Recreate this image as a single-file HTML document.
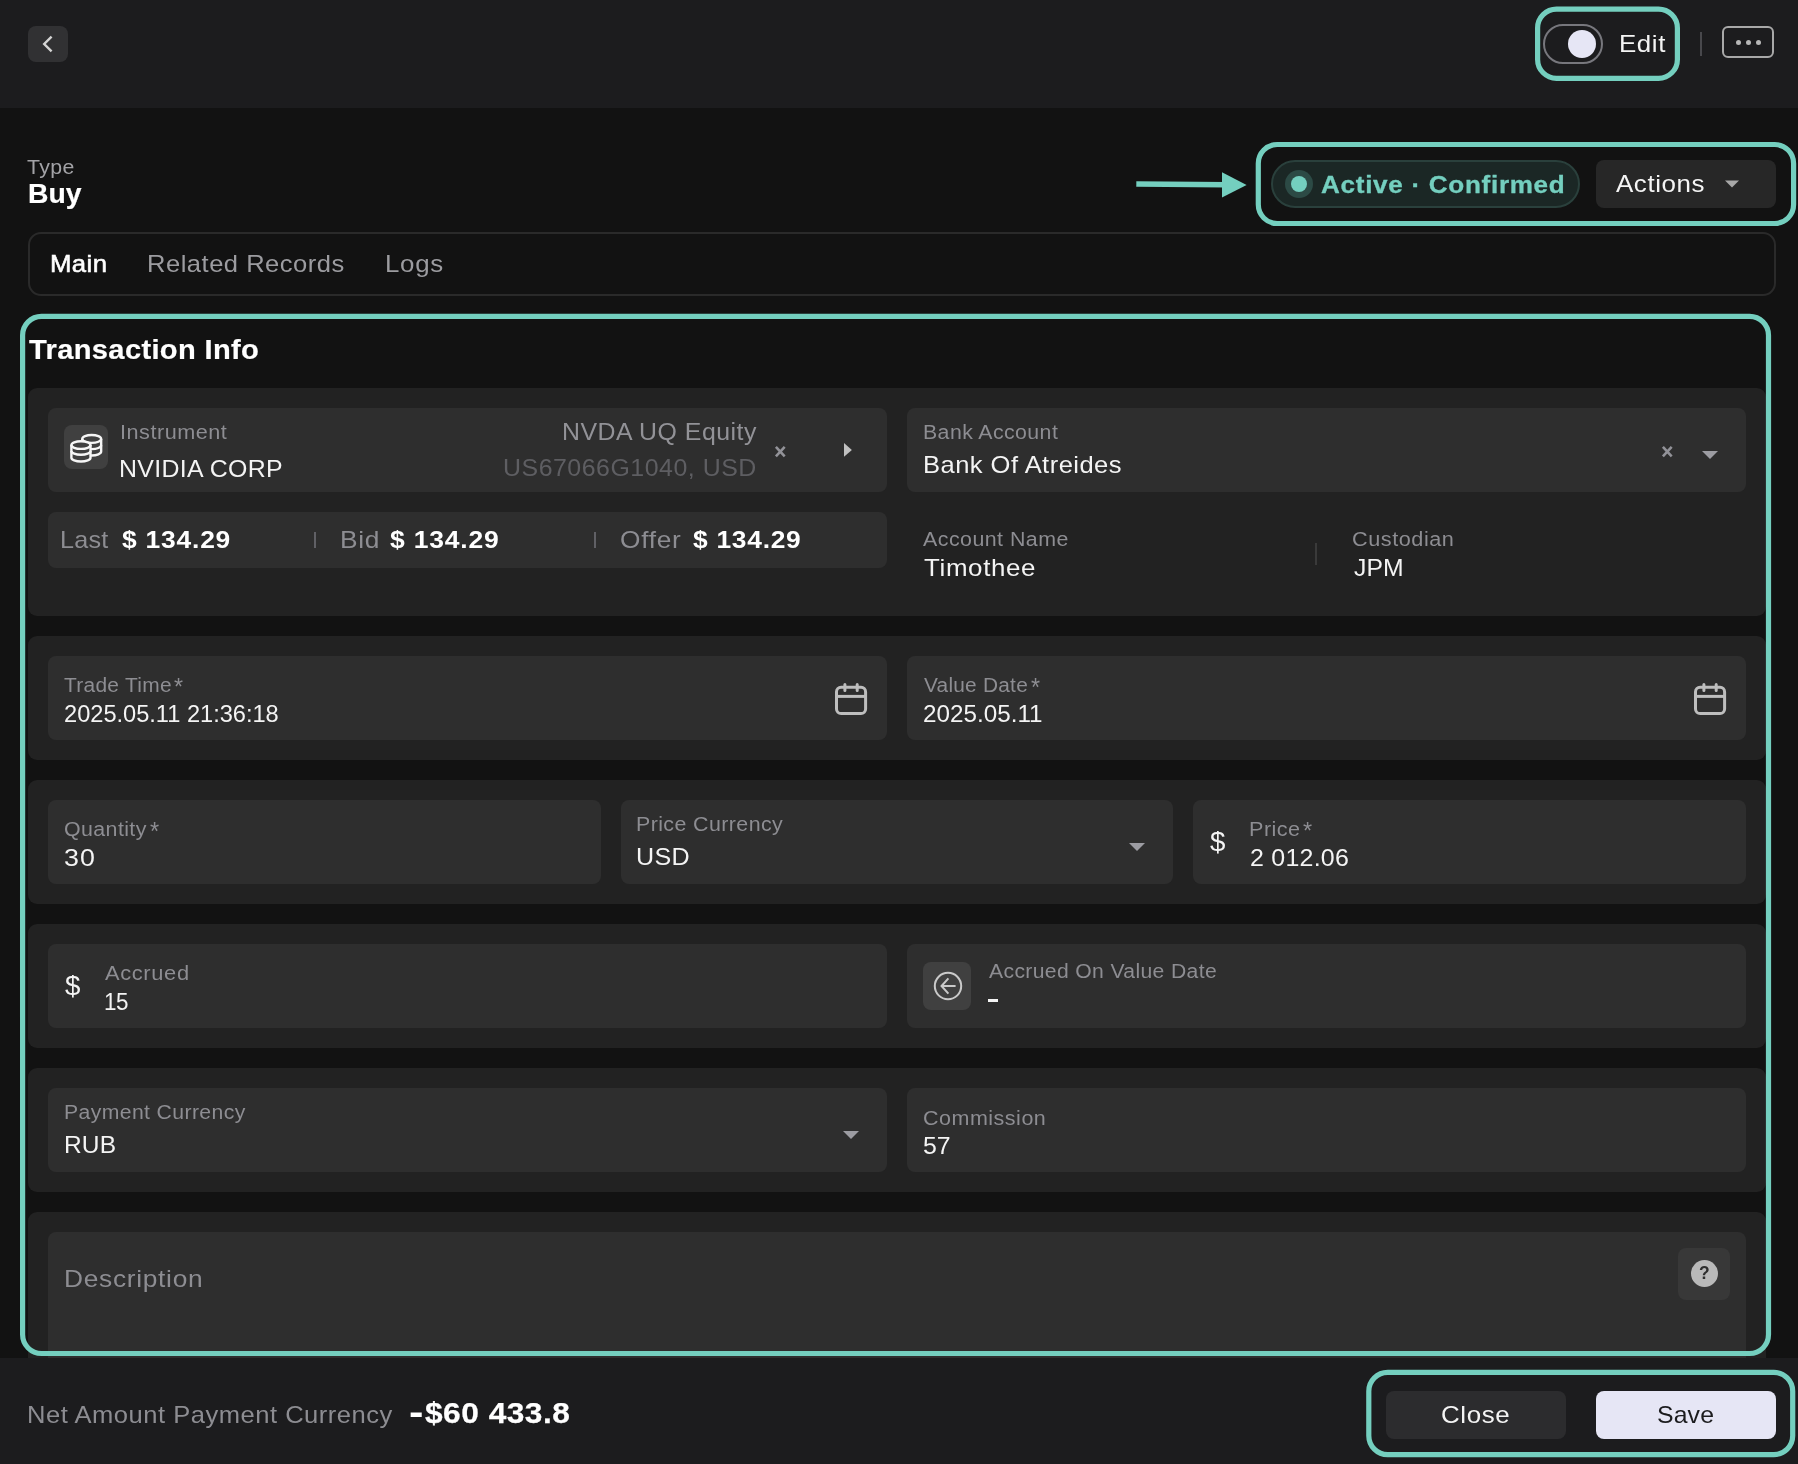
<!DOCTYPE html>
<html><head><meta charset="utf-8">
<style>
*{box-sizing:border-box;margin:0;padding:0}
html,body{width:1798px;height:1464px;overflow:hidden;background:#121212;font-family:"Liberation Sans",sans-serif;color:#fff}
.a{position:absolute}
.t{position:absolute;white-space:pre;line-height:1;transform-origin:0 50%}
.sec{position:absolute;left:28px;width:1738px;background:#222222;border-radius:9px}
.fld{position:absolute;background:#2e2e2e;border-radius:8px}
.teal{position:absolute;border:5px solid #74cfbf}
svg{position:absolute;overflow:visible}
</style></head><body>
<!-- header -->
<div class="a" style="left:0;top:0;width:1798px;height:108px;background:#1c1c1e"></div>
<div class="a" style="left:28px;top:26px;width:40px;height:36px;border-radius:8px;background:#313133"></div>
<svg style="left:28px;top:26px" width="40" height="36" viewBox="0 0 40 36"><path d="M23.6 10.6 L16.2 18 L23.6 25.4" fill="none" stroke="#d4d4d4" stroke-width="2.4"/></svg>
<div class="a" style="left:1543px;top:24px;width:60px;height:40px;border-radius:20px;border:2px solid #77777d"></div>
<div class="a" style="left:1568px;top:30px;width:28px;height:28px;border-radius:14px;background:#e6e6f5"></div>
<div class="a" style="left:1700px;top:32px;width:2px;height:24px;background:#48484c"></div>
<div class="a" style="left:1722px;top:26px;width:52px;height:32px;border-radius:6px;border:2px solid #a8a8a8"></div>
<div class="a" style="left:1735.5px;top:40px;width:5px;height:5px;border-radius:3px;background:#b8b8b8"></div>
<div class="a" style="left:1745.5px;top:40px;width:5px;height:5px;border-radius:3px;background:#b8b8b8"></div>
<div class="a" style="left:1755.5px;top:40px;width:5px;height:5px;border-radius:3px;background:#b8b8b8"></div>

<!-- status row -->
<svg style="left:0;top:0" width="1798" height="300" viewBox="0 0 1798 300"><path d="M1136.3 184 L1226 184.8" stroke="#74cfbf" stroke-width="5.4" fill="none"/><path d="M1222 172.3 L1246.6 184.9 L1222 197.4 Z" fill="#74cfbf"/></svg>
<div class="a" style="left:1271px;top:160px;width:309px;height:48px;border-radius:24px;background:#1b2725;border:2px solid #2a403c"></div>
<div class="a" style="left:1284.7px;top:170px;width:28px;height:28px;border-radius:14px;background:#2c4a45"></div>
<div class="a" style="left:1291px;top:176px;width:16px;height:16px;border-radius:8px;background:#74cfbf"></div>
<div class="a" style="left:1596px;top:160px;width:180px;height:48px;border-radius:8px;background:#272727"></div>
<svg style="left:1725px;top:180px" width="14" height="8" viewBox="0 0 14 8"><path d="M0 0.5 H14 L7 7.5 Z" fill="#a8a8a8"/></svg>

<!-- tabs -->
<div class="a" style="left:28px;top:232px;width:1748px;height:64px;border-radius:13px;border:2px solid #2a2a2a"></div>

<!-- sections -->
<div class="sec" style="top:388px;height:228px"></div>
<div class="fld" style="left:48px;top:408px;width:839px;height:84px"></div>
<div class="fld" style="left:907px;top:408px;width:839px;height:84px"></div>
<div class="fld" style="left:48px;top:512px;width:839px;height:56px"></div>
<div class="a" style="left:64px;top:425px;width:44px;height:44px;border-radius:8px;background:#404040"></div>
<svg style="left:64px;top:425px" width="44" height="44" viewBox="64 425 44 44" fill="none" stroke="#f6f6f6" stroke-width="2.4">
 <ellipse cx="91.7" cy="438.95" rx="9.45" ry="3.95"/>
 <path d="M82.25 438.95 V451.5 A9.45 3.95 0 0 0 101.15 451.5 V438.95"/>
 <path d="M82.25 445.2 A9.45 3.95 0 0 0 101.15 445.2"/>
 <path d="M71.4 445.05 V457.65 A9.55 3.85 0 0 0 90.5 457.65 V445.05 A9.55 3.85 0 0 0 71.4 445.05Z" fill="#404040" stroke="none"/>
 <ellipse cx="80.95" cy="445.05" rx="9.55" ry="3.85"/>
 <path d="M71.4 445.05 V457.65 A9.55 3.85 0 0 0 90.5 457.65 V445.05"/>
 <path d="M71.4 450.95 A9.55 3.85 0 0 0 90.5 450.95"/>
</svg>
<svg style="left:774.8px;top:445.8px" width="10.6" height="11.2" viewBox="0 0 10.6 11.2"><path d="M0.9 0.9 L9.7 10.3 M9.7 0.9 L0.9 10.3" stroke="#929298" stroke-width="2.6"/></svg>
<svg style="left:843.9px;top:443.2px" width="8" height="13.8" viewBox="0 0 8 13.8"><path d="M0 0 L7.9 6.9 L0 13.8 Z" fill="#c0c0c0"/></svg>
<svg style="left:1662px;top:445.8px" width="10.6" height="11.2" viewBox="0 0 10.6 11.2"><path d="M0.9 0.9 L9.7 10.3 M9.7 0.9 L0.9 10.3" stroke="#929298" stroke-width="2.6"/></svg>
<svg style="left:1701.5px;top:451px" width="16" height="8" viewBox="0 0 16 8"><path d="M0 0 H16 L8 8 Z" fill="#9c9ca2"/></svg>
<div class="a" style="left:314px;top:532px;width:2px;height:16px;background:#606065"></div>
<div class="a" style="left:593.5px;top:532px;width:2px;height:16px;background:#606065"></div>
<div class="a" style="left:1315px;top:543px;width:2px;height:22px;background:#3a3a3a"></div>

<div class="sec" style="top:636px;height:124px"></div>
<div class="fld" style="left:48px;top:656px;width:839px;height:84px"></div>
<div class="fld" style="left:907px;top:656px;width:839px;height:84px"></div>

<svg style="left:0;top:0" width="1798" height="1464" viewBox="0 0 1798 1464" fill="none" stroke="#bebebe" stroke-width="3" stroke-linecap="round">
<g><rect x="836.5" y="687.3" width="29.1" height="26.3" rx="4.6"/><path d="M836.5 696.4 H865.6" stroke-linecap="butt"/><path d="M844.9 684.6 V690.4 M857.2 684.6 V690.4"/></g>
<g transform="translate(859 0)"><rect x="836.5" y="687.3" width="29.1" height="26.3" rx="4.6"/><path d="M836.5 696.4 H865.6" stroke-linecap="butt"/><path d="M844.9 684.6 V690.4 M857.2 684.6 V690.4"/></g>
</svg>
<div class="sec" style="top:780px;height:124px"></div>
<div class="fld" style="left:48px;top:800px;width:553px;height:84px"></div>
<div class="fld" style="left:621px;top:800px;width:552px;height:84px"></div>
<div class="fld" style="left:1193px;top:800px;width:553px;height:84px"></div>
<svg style="left:1129px;top:843px" width="16" height="8" viewBox="0 0 16 8"><path d="M0 0 H16 L8 8 Z" fill="#9c9ca2"/></svg>

<div class="sec" style="top:924px;height:124px"></div>
<div class="fld" style="left:48px;top:944px;width:839px;height:84px"></div>
<div class="fld" style="left:907px;top:944px;width:839px;height:84px"></div>
<div class="a" style="left:923px;top:962px;width:48px;height:48px;border-radius:8px;background:#404040"></div>
<svg style="left:923px;top:962px" width="48" height="48" viewBox="923 962 48 48" fill="none" stroke="#cacaca" stroke-width="2"><circle cx="948" cy="986.05" r="13.2"/><path d="M955.6 986 H941.8 M948.4 978.4 L941.5 986 L948.4 993.6"/></svg>
<div class="a" style="left:987.8px;top:999.3px;width:10.4px;height:2.5px;background:#f4f4f4"></div>

<div class="sec" style="top:1068px;height:124px"></div>
<div class="fld" style="left:48px;top:1088px;width:839px;height:84px"></div>
<div class="fld" style="left:907px;top:1088px;width:839px;height:84px"></div>
<svg style="left:843px;top:1131px" width="16" height="8" viewBox="0 0 16 8"><path d="M0 0 H16 L8 8 Z" fill="#9c9ca2"/></svg>

<div class="sec" style="top:1212px;height:160px"></div>
<div class="fld" style="left:48px;top:1232px;width:1698px;height:140px"></div>
<div class="a" style="left:1678px;top:1248px;width:52px;height:52px;border-radius:8px;background:#383838"></div>
<div class="a" style="left:1690.5px;top:1260.4px;width:27.1px;height:27.1px;border-radius:14px;background:#b9b9b9"></div>

<!-- footer -->
<div class="a" style="left:0;top:1358px;width:1798px;height:106px;background:#1c1c1e"></div>
<div class="a" style="left:1386px;top:1391px;width:180px;height:48px;border-radius:8px;background:#2c2c2e"></div>
<div class="a" style="left:1596px;top:1391px;width:180px;height:48px;border-radius:8px;background:#e6e6f5"></div>

<svg style="left:0;top:0" width="1798" height="1464" viewBox="0 0 1798 1464" fill="none" stroke="#74cfbf" stroke-width="5.2">
<rect x="1537.60" y="9.10" width="139.80" height="69.20" rx="18.90"/>
<rect x="1258.30" y="144.50" width="535.30" height="79.00" rx="18.90"/>
<rect x="22.60" y="316.40" width="1745.90" height="1037.10" rx="18.90"/>
<rect x="1368.80" y="1372.40" width="423.90" height="82.20" rx="18.90"/>
</svg>
<div class="a" style="left:0;top:0;width:1798px;height:1464px;will-change:transform">
<div class="t" style="left:1618.92px;top:31.7px;font-size:24px;font-weight:400;color:#f4f4f4;letter-spacing:0.530px;transform:scaleX(1.0786);">Edit</div>
<div class="t" style="left:27.48px;top:157.1px;font-size:20px;font-weight:400;color:#a2a2a6;letter-spacing:0.410px;transform:scaleX(1.0643);">Type</div>
<div class="t" style="left:27.55px;top:180.3px;font-size:28px;font-weight:700;color:#ffffff;letter-spacing:-0.056px;transform:scaleX(1.0117);-webkit-text-stroke:0.2px #fff;">Buy</div>
<div class="t" style="left:1321.08px;top:172.7px;font-size:24px;font-weight:700;color:#74cfbf;letter-spacing:0.636px;transform:scaleX(1.0874);-webkit-text-stroke:0.3px #74cfbf;">Active · Confirmed</div>
<div class="t" style="left:1616.16px;top:171.7px;font-size:24px;font-weight:400;color:#f4f4f4;letter-spacing:0.532px;transform:scaleX(1.0797);">Actions</div>
<div class="t" style="left:49.95px;top:251.7px;font-size:24px;font-weight:400;color:#ffffff;letter-spacing:0.389px;transform:scaleX(1.0713);-webkit-text-stroke:0.55px #fff;">Main</div>
<div class="t" style="left:147.18px;top:251.7px;font-size:24px;font-weight:400;color:#9c9ca0;letter-spacing:0.467px;transform:scaleX(1.0648);">Related Records</div>
<div class="t" style="left:384.94px;top:251.7px;font-size:24px;font-weight:400;color:#9c9ca0;letter-spacing:0.656px;transform:scaleX(1.0772);">Logs</div>
<div class="t" style="left:28.64px;top:336.3px;font-size:28px;font-weight:700;color:#ffffff;letter-spacing:0.329px;transform:scaleX(1.0394);-webkit-text-stroke:0.2px #fff;">Transaction Info</div>
<div class="t" style="left:119.52px;top:422.1px;font-size:20px;font-weight:400;color:#8d8d92;letter-spacing:0.469px;transform:scaleX(1.0822);">Instrument</div>
<div class="t" style="left:119.35px;top:456.7px;font-size:24px;font-weight:400;color:#f4f4f4;letter-spacing:0.311px;transform:scaleX(1.0370);">NVIDIA CORP</div>
<div class="t" style="left:561.78px;top:421.1px;font-size:23.5px;font-weight:400;color:#929297;letter-spacing:0.457px;transform:scaleX(1.0590);">NVDA UQ Equity</div>
<div class="t" style="left:503.03px;top:457.1px;font-size:23.5px;font-weight:400;color:#5e5e62;letter-spacing:0.494px;transform:scaleX(1.0593);">US67066G1040, USD</div>
<div class="t" style="left:59.56px;top:527.7px;font-size:24px;font-weight:400;color:#8d8d92;letter-spacing:0.237px;transform:scaleX(1.0491);">Last</div>
<div class="t" style="left:121.65px;top:527.7px;font-size:24px;font-weight:700;color:#ffffff;letter-spacing:0.724px;transform:scaleX(1.0996);">$ 134.29</div>
<div class="t" style="left:339.58px;top:527.7px;font-size:24px;font-weight:400;color:#8d8d92;letter-spacing:0.659px;transform:scaleX(1.0974);">Bid</div>
<div class="t" style="left:389.97px;top:527.7px;font-size:24px;font-weight:700;color:#ffffff;letter-spacing:0.731px;transform:scaleX(1.1022);">$ 134.29</div>
<div class="t" style="left:619.65px;top:527.7px;font-size:24px;font-weight:400;color:#8d8d92;letter-spacing:0.658px;transform:scaleX(1.0943);">Offer</div>
<div class="t" style="left:693.09px;top:527.7px;font-size:24px;font-weight:700;color:#ffffff;letter-spacing:0.673px;transform:scaleX(1.0979);">$ 134.29</div>
<div class="t" style="left:922.54px;top:422.1px;font-size:20px;font-weight:400;color:#8d8d92;letter-spacing:0.396px;transform:scaleX(1.0642);">Bank Account</div>
<div class="t" style="left:922.52px;top:452.7px;font-size:24px;font-weight:400;color:#f4f4f4;letter-spacing:0.425px;transform:scaleX(1.0647);">Bank Of Atreides</div>
<div class="t" style="left:923.16px;top:529.1px;font-size:20px;font-weight:400;color:#8d8d92;letter-spacing:0.445px;transform:scaleX(1.0681);">Account Name</div>
<div class="t" style="left:923.56px;top:555.7px;font-size:24px;font-weight:400;color:#f4f4f4;letter-spacing:0.596px;transform:scaleX(1.0788);">Timothee</div>
<div class="t" style="left:1352.31px;top:529.1px;font-size:20px;font-weight:400;color:#8d8d92;letter-spacing:0.500px;transform:scaleX(1.0833);">Custodian</div>
<div class="t" style="left:1353.89px;top:555.7px;font-size:24px;font-weight:400;color:#f4f4f4;letter-spacing:0.090px;transform:scaleX(1.0306);">JPM</div>
<div class="t" style="left:64.44px;top:675.1px;font-size:20px;font-weight:400;color:#8d8d92;letter-spacing:0.259px;transform:scaleX(1.0468);">Trade Time</div>
<div class="t" style="left:64.10px;top:701.7px;font-size:24px;font-weight:400;color:#f4f4f4;letter-spacing:-0.026px;transform:scaleX(0.9853);">2025.05.11 21:36:18</div>
<div class="t" style="left:924.31px;top:675.1px;font-size:20px;font-weight:400;color:#8d8d92;letter-spacing:0.221px;transform:scaleX(1.0429);">Value Date</div>
<div class="t" style="left:923.04px;top:701.7px;font-size:24px;font-weight:400;color:#f4f4f4;letter-spacing:0.015px;transform:scaleX(1.0095);">2025.05.11</div>
<div class="t" style="left:63.86px;top:819.1px;font-size:20px;font-weight:400;color:#8d8d92;letter-spacing:0.360px;transform:scaleX(1.0697);">Quantity</div>
<div class="t" style="left:64.40px;top:845.7px;font-size:24px;font-weight:400;color:#f4f4f4;letter-spacing:1.050px;transform:scaleX(1.1155);">30</div>
<div class="t" style="left:636.02px;top:814.1px;font-size:20px;font-weight:400;color:#8d8d92;letter-spacing:0.383px;transform:scaleX(1.0691);">Price Currency</div>
<div class="t" style="left:636.19px;top:844.7px;font-size:24px;font-weight:400;color:#f4f4f4;letter-spacing:0.370px;transform:scaleX(1.0446);">USD</div>
<div class="t" style="left:1249.15px;top:819.1px;font-size:20px;font-weight:400;color:#8d8d92;letter-spacing:0.422px;transform:scaleX(1.0814);">Price</div>
<div class="t" style="left:1249.58px;top:845.7px;font-size:24px;font-weight:400;color:#f4f4f4;letter-spacing:0.230px;transform:scaleX(1.0403);">2 012.06</div>
<div class="t" style="left:105.12px;top:963.1px;font-size:20px;font-weight:400;color:#8d8d92;letter-spacing:0.595px;transform:scaleX(1.0925);">Accrued</div>
<div class="t" style="left:104.13px;top:989.7px;font-size:24px;font-weight:400;color:#f4f4f4;letter-spacing:-0.535px;transform:scaleX(0.9346);">15</div>
<div class="t" style="left:988.55px;top:961.1px;font-size:20px;font-weight:400;color:#8d8d92;letter-spacing:0.341px;transform:scaleX(1.0567);">Accrued On Value Date</div>
<div class="t" style="left:63.85px;top:1102.1px;font-size:20px;font-weight:400;color:#8d8d92;letter-spacing:0.365px;transform:scaleX(1.0596);">Payment Currency</div>
<div class="t" style="left:63.81px;top:1132.7px;font-size:24px;font-weight:400;color:#f4f4f4;letter-spacing:0.117px;transform:scaleX(1.0210);">RUB</div>
<div class="t" style="left:923.43px;top:1108.1px;font-size:20px;font-weight:400;color:#8d8d92;letter-spacing:0.475px;transform:scaleX(1.0743);">Commission</div>
<div class="t" style="left:923.48px;top:1133.7px;font-size:24px;font-weight:400;color:#f4f4f4;letter-spacing:-0.154px;transform:scaleX(1.0359);">57</div>
<div class="t" style="left:64.06px;top:1266.7px;font-size:24px;font-weight:400;color:#8d8d92;letter-spacing:0.643px;transform:scaleX(1.0961);">Description</div>
<div class="t" style="left:27.18px;top:1402.7px;font-size:24px;font-weight:400;color:#8d8d92;letter-spacing:0.481px;transform:scaleX(1.0641);">Net Amount Payment Currency</div>
<div class="t" style="left:424.95px;top:1397.6px;font-size:30px;font-weight:700;color:#ffffff;letter-spacing:0.481px;transform:scaleX(1.0552);-webkit-text-stroke:0.25px #fff;">$60 433.8</div>
<div class="t" style="left:1441.36px;top:1402.7px;font-size:24px;font-weight:400;color:#f4f4f4;letter-spacing:0.595px;transform:scaleX(1.0789);">Close</div>
<div class="t" style="left:1656.93px;top:1402.7px;font-size:24px;font-weight:400;color:#1c1c1e;letter-spacing:0.134px;transform:scaleX(1.0337);">Save</div>
<div class="t" style="left:174.4px;top:675.2px;font-size:24.7px;font-weight:400;color:#8d8d92;transform:scaleX(0.940)">*</div>
<div class="t" style="left:1030.6px;top:675.1px;font-size:25.3px;font-weight:400;color:#8d8d92;transform:scaleX(0.920)">*</div>
<div class="t" style="left:150.0px;top:818.8px;font-size:25.6px;font-weight:400;color:#8d8d92;transform:scaleX(0.920)">*</div>
<div class="t" style="left:1303.3px;top:819.1px;font-size:24.7px;font-weight:400;color:#8d8d92;transform:scaleX(0.951)">*</div>
<div class="t" style="left:1209.7px;top:827.0px;font-size:28.5px;font-weight:400;color:#f4f4f4;transform:scaleX(0.972)">$</div>
<div class="t" style="left:65.0px;top:971.0px;font-size:28.5px;font-weight:400;color:#f4f4f4;transform:scaleX(0.972)">$</div>
<div class="t" style="left:408.9px;top:1392.5px;font-size:37.5px;font-weight:700;color:#ffffff;transform:scaleX(1.156)">-</div>
<div class="t" style="left:1698.7px;top:1264.2px;font-size:18.7px;font-weight:700;color:#2e2e2e;transform:scaleX(0.934)">?</div>
</div>
</body></html>
